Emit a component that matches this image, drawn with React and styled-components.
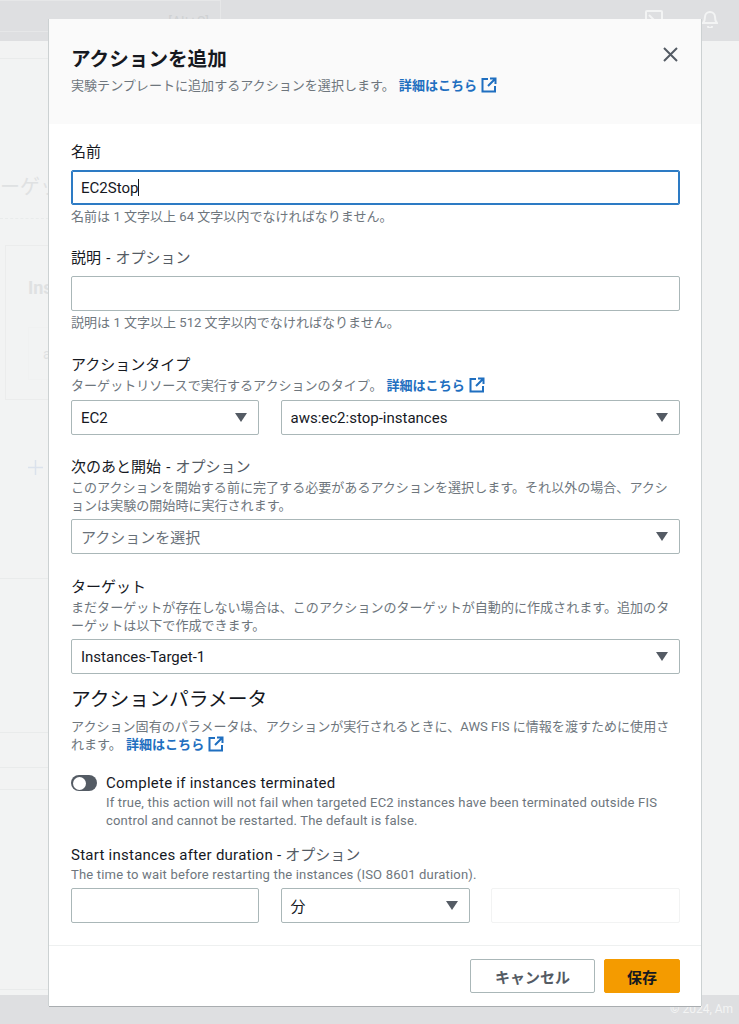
import React from 'react';
import styled, { createGlobalStyle } from 'styled-components';

const FONT = `"Roboto", "Noto Sans CJK JP", sans-serif`;

const GlobalStyle = createGlobalStyle`
  html, body {
    margin: 0;
    padding: 0;
    background: #f2f3f3;
  }
  * {
    box-sizing: border-box;
  }
`;

const Page = styled.div`
  position: relative;
  width: 739px;
  height: 1024px;
  overflow: hidden;
  display: flex;
  flex-direction: column;
  background: #f2f3f3;
  font-family: ${FONT};
`;

// dimmed console behind the dialog
const TopBar = styled.div`
  height: 41px;
  flex: none;
  background: #dedfe1;
  display: flex;
  align-items: flex-start;
  padding: 10px 21px 0 0;
  color: #f3f4f4;
`;

const SearchBox = styled.div`
  width: 221px;
  height: 32px;
  margin: -10px auto 0 0;
  border: 1px solid #e6e7e8;
  border-left: 0;
  padding: 11px 11px 0 0;
  text-align: right;
  font-size: 14px;
  line-height: 20px;
  color: #cfd1d3;
`;

const TopIcons = styled.div`
  display: flex;
  gap: 39px;
`;

const BackContent = styled.div`
  flex: 1;
  overflow: hidden;
  color: #dfe1e2;
`;

const BackLine = styled.div`
  width: 100px;
  height: 1px;
  margin-top: ${(p) => p.$top}px;
  border-top: 1px ${(p) => (p.$dashed ? 'dashed' : 'solid')} #e9ebeb;
`;

const BackTitle = styled.div`
  margin-top: 116px;
  font-size: 20px;
  line-height: 24px;
  white-space: nowrap;
`;

const BackCard = styled.div`
  margin: 26px 0 0 5px;
  width: 120px;
  height: 155px;
  border: 1px solid #ebecec;
  padding: 30px 0 0 22px;
  font-size: 18px;
  line-height: 24px;
  font-weight: 700;
`;

const BackInner = styled.div`
  margin-top: 27px;
  height: 53px;
  padding: 14px 0 0 14px;
  border: 1px solid #f0f1f1;
  font-size: 14px;
  font-weight: 400;
`;

const BackPlus = styled.svg`
  display: block;
  margin: 60px 0 0 28px;
  color: #dbe2ec;
`;

const Footer = styled.div`
  height: 29px;
  flex: none;
  background: #dedfe1;
  color: #f3f4f4;
  font-size: 12px;
  line-height: 29px;
  padding-left: 670px;
  white-space: nowrap;
`;

const Modal = styled.div`
  position: absolute;
  left: 49px;
  top: 19px;
  width: 652px;
  height: 987px;
  background: #fff;
  box-shadow: -1px 0 0 #ccd1d2, 1px 0 0 #ccd1d2, 0 1px 0 #a9adb0;
  display: flex;
  flex-direction: column;
`;

const Header = styled.header`
  position: relative;
  height: 105px;
  flex: none;
  background: #fafafa;
  padding: 27px 22px 0;
`;

const Title = styled.h1`
  margin: 0 0 3px;
  font-size: 19.6px;
  line-height: 28px;
  font-weight: 700;
  color: #16191f;
`;

const CloseButton = styled.button`
  position: absolute;
  top: 27px;
  right: 22px;
  width: 17px;
  height: 17px;
  padding: 0;
  border: 0;
  background: none;
  color: #545b64;
  display: flex;
`;

const Body = styled.div`
  flex: 1;
  padding: 18px 21px 0 22px;
  display: flex;
  flex-direction: column;
`;

const Field = styled.div`
  margin-top: ${(p) => p.$top || 0}px;
`;

const Label = styled.div`
  font-size: 15px;
  line-height: 20px;
  color: #16191f;
  letter-spacing: ${(p) => (p.$latin ? '0.25px' : '0')};
  word-spacing: ${(p) => (p.$latin ? '0' : '1.5px')};
`;

const Muted = styled.span`
  color: #545b64;
  letter-spacing: 0;
`;

const Desc = styled.div`
  margin-top: ${(p) => p.$top || 0}px;
  font-size: 13.05px;
  line-height: 18px;
  color: #6e767d;
  line-break: loose;
  letter-spacing: ${(p) => (p.$latin ? '0.17px' : '0')};
`;

const Link = styled.a`
  color: #1f6fc0;
  font-weight: 700;
  margin-left: 4px;
  white-space: nowrap;
  svg {
    margin-left: 4px;
    vertical-align: -3px;
  }
`;

const Input = styled.div`
  height: 35px;
  margin-top: ${(p) => p.$top || 0}px;
  border: 1px solid ${(p) => (p.$focused ? '#2d7bc4' : '#aab7b8')};
  box-shadow: ${(p) => (p.$focused ? 'inset 0 0 0 1px #2d7bc4' : 'none')};
  border-radius: 2px;
  padding: 0 9px;
  display: flex;
  align-items: center;
  justify-content: space-between;
  font-size: 15px;
  color: ${(p) => (p.$placeholder ? '#687078' : '#16191f')};
  background: #fff;
`;

const Caret = styled.span`
  display: inline-block;
  width: 1px;
  height: 17px;
  vertical-align: -3px;
  background: #16191f;
`;

const SelectArrow = styled.span`
  width: 0;
  height: 0;
  margin-right: 2px;
  border-left: 6px solid transparent;
  border-right: 6px solid transparent;
  border-top: 9px solid #545b64;
`;

const Row = styled.div`
  display: grid;
  grid-template-columns: ${(p) => p.$cols};
  gap: 21.5px;
  margin-top: ${(p) => p.$top}px;
`;

const EmptySlot = styled.div`
  height: 35px;
  border: 1px solid #f2f3f3;
  border-radius: 2px;
`;

const SectionTitle = styled.h2`
  margin: 14px 0 0;
  font-size: 19.8px;
  line-height: 24px;
  font-weight: 400;
  color: #16191f;
`;

const ToggleRow = styled.div`
  display: flex;
  gap: 9px;
  margin-top: 19px;
`;

const Toggle = styled.span`
  flex: none;
  position: relative;
  width: 26px;
  height: 16px;
  margin-top: 2px;
  border-radius: 8px;
  background: #545b64;
  &::after {
    content: '';
    position: absolute;
    left: 1.5px;
    top: 1.5px;
    width: 13px;
    height: 13px;
    border-radius: 50%;
    background: #fff;
  }
`;

const FootBar = styled.footer`
  height: 61px;
  flex: none;
  border-top: 1px solid #eef0f0;
  padding: 13px 21px 0 0;
  display: flex;
  justify-content: flex-end;
  gap: 9px;
`;

const Button = styled.button`
  height: 34px;
  width: ${(p) => p.$width}px;
  padding: 0;
  border-radius: 2px;
  border: 1px solid ${(p) => (p.$primary ? '#f49b00' : '#aab7b8')};
  background: ${(p) => (p.$primary ? '#f49b00' : '#fff')};
  color: ${(p) => (p.$primary ? '#16191f' : '#545b64')};
  font-family: ${FONT};
  font-size: 15px;
  font-weight: 700;
`;

const ExternalIcon = () => (
  <svg width="16" height="16" viewBox="0 0 16 16" fill="none" stroke="currentColor" strokeWidth="2">
    <path d="M7 2H1.5v12.5h12.5V9" />
    <path d="M9 1.5h5.5V7M14.5 1.5 7 9" />
  </svg>
);

const Select = ({ children, placeholder, top }) => (
  <Input $placeholder={placeholder} $top={top}>
    <span>{children}</span>
    <SelectArrow />
  </Input>
);

export default function App() {
  return (
    <Page>
      <GlobalStyle />
      <TopBar>
        <SearchBox>[Alt+S]</SearchBox>
        <TopIcons>
          <svg width="18" height="18" viewBox="0 0 18 18" fill="none" stroke="currentColor" strokeWidth="2">
            <rect x="1" y="1" width="16" height="16" rx="1" />
            <path d="m4 5 5 5" />
          </svg>
          <svg width="16" height="18" viewBox="0 0 16 18" fill="none" stroke="currentColor" strokeWidth="2">
            <path d="M1 13c1.500-1.500 2-3 2-6a5 5 0 0 1 10 0c0 3 .5 4.500 2 6zM6 16a2 2 0 0 0 4 0" />
          </svg>
        </TopIcons>
      </TopBar>
      <BackContent>
        <BackLine $top={17} />
        <BackTitle>ーゲッ</BackTitle>
        <BackLine $top={19} $dashed />
        <BackCard>
          Ins
          <BackInner>a</BackInner>
        </BackCard>
        <BackPlus width="15" height="15" viewBox="0 0 15 15" fill="none" stroke="currentColor" strokeWidth="1.5">
          <path d="M7.500 0v15M0 7.500h15" />
        </BackPlus>
        <BackLine $top={103} />
        <BackLine $top={153} />
        <BackLine $top={34} />
        <BackLine $top={21} />
        <BackLine $top={199} />
      </BackContent>
      <Footer>© 2024, Am</Footer>

      <Modal>
        <Header>
          <Title>アクションを追加</Title>
          <Desc>
            実験テンプレートに追加するアクションを選択します。
            <Link>
              詳細はこちら
              <ExternalIcon />
            </Link>
          </Desc>
          <CloseButton aria-label="閉じる">
            <svg width="17" height="17" viewBox="0 0 17 17" fill="none" stroke="currentColor" strokeWidth="2">
              <path d="m2 2 13 13M15 2 2 15" />
            </svg>
          </CloseButton>
        </Header>

        <Body>
          <Field>
            <Label>名前</Label>
            <Input $top={8} $focused>
              <span>
                EC2Stop
                <Caret />
              </span>
            </Input>
            <Desc $top={3}>名前は 1 文字以上 64 文字以内でなければなりません。</Desc>
          </Field>

          <Field $top={22}>
            <Label>説明 - <Muted>オプション</Muted></Label>
            <Input $top={8} />
            <Desc $top={3}>説明は 1 文字以上 512 文字以内でなければなりません。</Desc>
          </Field>

          <Field $top={23}>
            <Label>アクションタイプ</Label>
            <Desc $top={2}>
              ターゲットリソースで実行するアクションのタイプ。
              <Link>
                詳細はこちら
                <ExternalIcon />
              </Link>
            </Desc>
            <Row $cols="188px 1fr" $top={5}>
              <Select>EC2</Select>
              <Select>aws:ec2:stop-instances</Select>
            </Row>
          </Field>

          <Field $top={22}>
            <Label>次のあと開始 - <Muted>オプション</Muted></Label>
            <Desc $top={2}>
              このアクションを開始する前に完了する必要があるアクションを選択します。それ以外の場合、アクションは実験の開始時に実行されます。
            </Desc>
            <Select placeholder top={4}>アクションを選択</Select>
          </Field>

          <Field $top={23}>
            <Label>ターゲット</Label>
            <Desc $top={2}>
              まだターゲットが存在しない場合は、このアクションのターゲットが自動的に作成されます。追加のターゲットは以下で作成できます。
            </Desc>
            <Select top={4}>Instances-Target-1</Select>
          </Field>

          <SectionTitle>アクションパラメータ</SectionTitle>
          <Desc $top={6}>
            アクション固有のパラメータは、アクションが実行されるときに、AWS FIS に情報を渡すために使用されます。
            <Link>
              詳細はこちら
              <ExternalIcon />
            </Link>
          </Desc>

          <ToggleRow>
            <Toggle />
            <div>
              <Label $latin>Complete if instances terminated</Label>
              <Desc $top={1} $latin>
                If true, this action will not fail when targeted EC2 instances have been terminated outside FIS control and cannot be restarted. The default is false.
              </Desc>
            </div>
          </ToggleRow>

          <Field $top={15}>
            <Label $latin>Start instances after duration - <Muted>オプション</Muted></Label>
            <Desc $top={1} $latin>The time to wait before restarting the instances (ISO 8601 duration).</Desc>
            <Row $cols="188px 189px 1fr" $top={4}>
              <Input />
              <Select>分</Select>
              <EmptySlot />
            </Row>
          </Field>
        </Body>

        <FootBar>
          <Button $width={125}>キャンセル</Button>
          <Button $primary $width={76}>保存</Button>
        </FootBar>
      </Modal>
    </Page>
  );
}
